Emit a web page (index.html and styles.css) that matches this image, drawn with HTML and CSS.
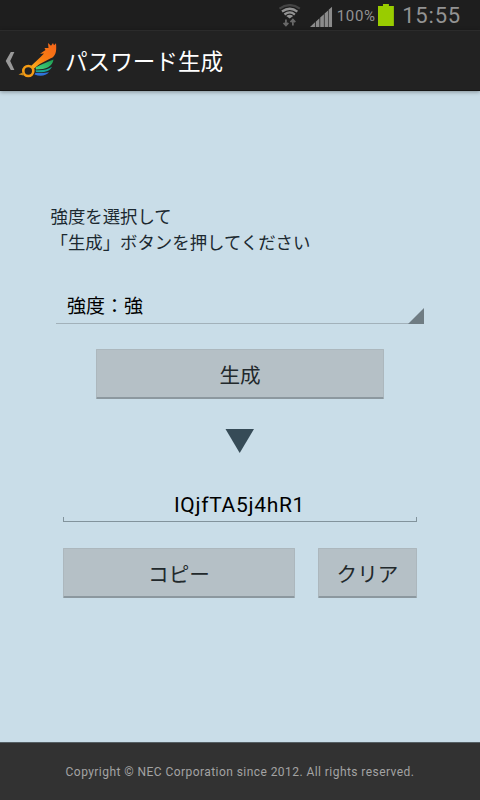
FILE: index.html
```html
<!DOCTYPE html>
<html lang="ja">
  <head>
    <meta charset="UTF-8" />
    <meta name="viewport" content="width=device-width, initial-scale=1.0" />
    <title>パスワード生成</title>
    <link rel="stylesheet" href="styles.css">
  </head>
  <body>
    <div class="status-bar">
      <svg class="wifi" width="24" height="24" viewBox="0 0 24 24" fill="none">
        <path d="M1.5 4.5Q12 -2.5 22 4.5" stroke="#444" stroke-width="2.2" />
        <path d="M4 7.5Q12 1.8 19.5 7.5M6.5 10.5Q12 6.3 17 10.5" stroke="#939393" stroke-width="2.3" />
        <path d="M8.3 12Q11.8 9.5 15.3 12L11.8 14.5Z" fill="#939393" />
        <path d="M8 15.5V21M5.6 19L8 21.6L10.4 19M15 21.5V15.8M12.6 18.2L15 15.6L17.4 18.2" stroke="#686868" stroke-width="1.8" />
      </svg>
      <svg class="signal" width="23" height="21" viewBox="0 0 23 21" fill="#8b8b8b">
        <path d="M0 21L5 16.4V21ZM5.8 21V15.7L9.5 12.3V21ZM10.3 21V11.5L14 8.2V21ZM14.7 21V7.6L18.2 4.4V21ZM18.8 21V3.8L22.2 0.7V21Z" />
      </svg>
      <span class="percent">100%</span>
      <svg class="battery" width="16" height="22" viewBox="0 0 16 22">
        <path d="M5 0H11V2H16V22H0V2H5Z" fill="#99cc00" />
      </svg>
      <span class="clock">15:55</span>
    </div>

    <header class="action-bar">
      <svg class="back" width="10" height="18" viewBox="0 0 10 18">
        <path d="M5.8 0H9.4L5.2 9L9.4 18H5.8L0.7 9Z" fill="#999" />
      </svg>
      <svg class="logo" width="40" height="38" viewBox="0 0 40 38">
        <defs>
          <linearGradient id="orange" x1="1" y1="0" x2="0" y2="1">
            <stop offset="0" stop-color="#f4641a" />
            <stop offset="0.55" stop-color="#fa7d12" />
            <stop offset="1" stop-color="#fdb51d" />
          </linearGradient>
          <linearGradient id="green" x1="1" y1="0" x2="0" y2="1">
            <stop offset="0" stop-color="#1c9d51" />
            <stop offset="1" stop-color="#48d47f" />
          </linearGradient>
        </defs>
        <path d="M35.5 17.5C30 20 23 22 17.5 25.5L18 27.5C28 27.5 34.5 24.5 35.5 17.5Z" fill="url(#green)" />
        <path d="M34 24.8C30 27.8 24 28.6 17.5 28.2L18 30C25 31 32 29.5 34 24.8Z" fill="#18a795" />
        <path d="M31 30C27 31.2 22 31.4 17.5 30.7L16.5 32.4C22 35 28 34 31 30Z" fill="#2f73dc" />
        <path d="M12.5 24.5C17 20.5 22 15.5 26 11.5L22 11.8L27.5 8L26.5 6L30.5 6L30 1L33 3.8L35 1L36 3.2L38 1.3C38.5 7.5 38.5 12.5 34.5 15.5C28.5 18.5 22 21 15.5 27Z" fill="url(#orange)" />
        <circle cx="10.3" cy="29" r="5" fill="none" stroke="#f59b14" stroke-width="2.6" />
        <path d="M0.5 32.5L5.5 30V33.5Z" fill="#c98a1c" />
      </svg>
      <h1 class="title">パスワード生成</h1>
    </header>

    <main class="content">
      <p class="intro">強度を選択して<br />「生成」ボタンを押してください</p>

      <div class="spinner">
        <span>強度：強</span>
        <svg class="corner" width="16" height="16" viewBox="0 0 16 16">
          <path d="M16 0V16H0Z" fill="#6f7c83" />
        </svg>
      </div>

      <button class="button generate">生成</button>

      <svg class="arrow" width="30" height="24" viewBox="0 0 30 24">
        <path d="M0.5 0H29L14.7 24Z" fill="#364b57" />
      </svg>

      <div class="result">
        <div class="password">IQjfTA5j4hR1</div>

        <div class="actions">
          <button class="button copy">コピー</button>
          <button class="button clear">クリア</button>
        </div>
      </div>
    </main>

    <footer class="footer">Copyright © NEC Corporation since 2012. All rights reserved.</footer>
  </body>
</html>
```

FILE: styles.css
```css
* {
  box-sizing: border-box;
}
body {
  margin: 0;
  width: 480px;
  height: 800px;
  display: flex;
  flex-direction: column;
  overflow: hidden;
  font-family: Roboto, "Noto Sans CJK JP", sans-serif;
  background-color: #c9dde8;
}
.status-bar {
  height: 30px;
  display: flex;
  align-items: flex-start;
  padding: 4px 19px 0 278px;
  background-color: #1e1e1e;
  color: #939393;
}
.signal {
  margin: 2px 0 0 8px;
}
.percent {
  width: 41px;
  margin-left: 4px;
  font-size: 15px;
  line-height: 24px;
  letter-spacing: 0.7px;
}
.battery {
  margin-left: 1px;
}
.clock {
  margin-left: 8px;
  font-size: 22px;
  line-height: 23px;
  letter-spacing: 0.8px;
}
.action-bar {
  height: 61px;
  flex: none;
  display: flex;
  align-items: center;
  padding-left: 5px;
  border-top: 1px solid #2b2b2b;
  border-bottom: 1px solid #161616;
  background-color: #222;
  box-shadow: 0 1px 4px rgba(0, 0, 0, 0.35);
}
.logo {
  margin-left: 3px;
}
.title {
  margin: 0 0 0 7px;
  padding-top: 4px;
  font-size: 22.6px;
  font-weight: 400;
  line-height: 30px;
  color: #fff;
}
.content {
  flex: 1;
  display: flex;
  flex-direction: column;
  align-items: center;
  padding-top: 113px;
}
.intro {
  width: 379px;
  margin: 0;
  font-size: 17.4px;
  line-height: 26px;
  color: #1c2930;
}
.spinner {
  width: 368px;
  height: 35px;
  margin-top: 33px;
  padding-left: 11px;
  display: flex;
  justify-content: space-between;
  align-items: flex-end;
  border-bottom: 1px solid #a2b1ba;
  font-size: 19px;
  line-height: 33px;
  color: #000;
}
.corner {
  margin-bottom: -1px;
}
.button {
  height: 50px;
  padding: 0;
  border: 1px solid #acb7bd;
  border-bottom: 2px solid #8c989f;
  border-radius: 1px;
  background-color: #b5c0c6;
  font-family: inherit;
  font-size: 20.6px;
  color: #22292c;
}
.generate {
  width: 288px;
  margin-top: 25px;
}
.arrow {
  margin-top: 30px;
}
.result {
  width: 354px;
}
.password {
  height: 38px;
  margin-top: 31px;
  padding-right: 1px;
  font-size: 21px;
  line-height: 42px;
  letter-spacing: 0.7px;
  text-align: center;
  color: #000;
  /* bottom rule with short ticks at both ends */
  background:
    linear-gradient(#82939c, #82939c) left bottom / 1px 5px no-repeat,
    linear-gradient(#82939c, #82939c) right bottom / 1px 5px no-repeat,
    linear-gradient(#82939c, #82939c) left bottom / 100% 1px no-repeat;
}
.actions {
  margin-top: 26px;
  display: flex;
  justify-content: space-between;
}
.copy {
  width: 232px;
}
.clear {
  width: 99px;
}
.footer {
  height: 58px;
  flex: none;
  border-top: 1px solid #555f64;
  background-color: #323232;
  font-size: 12px;
  line-height: 58px;
  letter-spacing: 0.44px;
  text-align: center;
  color: #a3a3a3;
}
```
